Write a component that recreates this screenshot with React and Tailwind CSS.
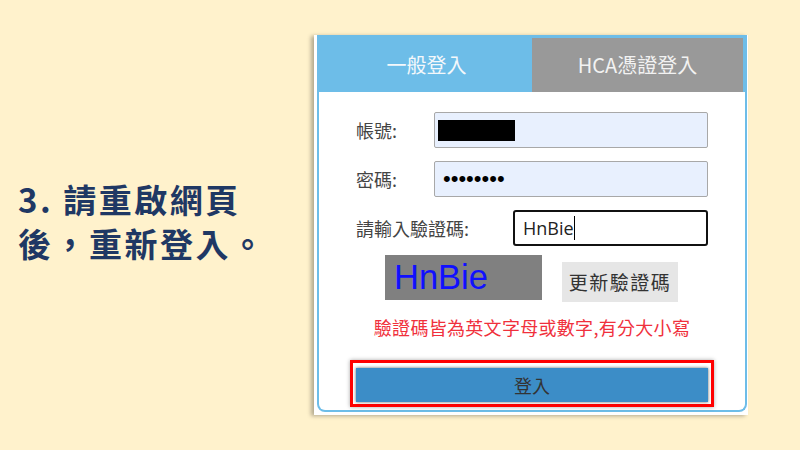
export default function App() {
  const cjk = { fontFamily: '"Noto Sans CJK TC", "Noto Sans", sans-serif' };
  return (
    <div className="w-[800px] h-[450px] bg-[#fff2cc] flex items-start overflow-hidden">
      <div
        className="w-[314px] shrink-0 pt-[177px] pl-[18px] text-[33px] leading-[44px] font-bold text-[#1f3864] tracking-[2.5px]"
        style={cjk}
      >
        <div>3. 請重啟網頁</div>
        <div>後，重新登入。</div>
      </div>
      <div className="mt-[35px] w-[434px] h-[380px] bg-white pl-[3px] pr-[1px] shadow-[-3px_1px_4px_rgba(0,0,0,0.3)]">
        <div className="h-[377px] border-2 border-t-0 border-[#6dbde8] rounded-b-[8px] flex flex-col" style={cjk}>
          <div className="flex h-[57px] bg-[#6dbde8] pt-[3px] pr-[2px] pl-[2px]">
            <div className="flex-1 bg-[#6dbde8] flex items-center justify-center text-[20px] text-[#f4f8fb]">
              一般登入
            </div>
            <div className="flex-1 bg-[#999999] flex items-center justify-center text-[20px] text-[#f2f2f2]">
              HCA憑證登入
            </div>
          </div>
          <div className="flex flex-col px-[37px] pt-[20px] text-[18px] text-[#444]">
            <div className="flex items-center h-[36px]">
              <div className="w-[78px] shrink-0">帳號:</div>
              <div className="flex-1 h-[36px] bg-[#e8f0fe] border border-[#a8a8a8] rounded-[2px] flex items-center pl-[3px]">
                <div className="w-[77px] h-[21px] bg-black" />
              </div>
            </div>
            <div className="flex items-center h-[36px] mt-[13px]">
              <div className="w-[78px] shrink-0">密碼:</div>
              <div className="flex-1 h-[36px] bg-[#e8f0fe] border border-[#a8a8a8] rounded-[2px] flex items-center pl-[8px]">
                <span className="text-[22px] text-black leading-none" style={{ fontFamily: '"Liberation Sans", sans-serif' }}>
                  ••••••••
                </span>
              </div>
            </div>
            <div className="flex items-center h-[36px] mt-[13px]">
              <div className="w-[157px] shrink-0">請輸入驗證碼:</div>
              <div className="flex-1 h-[36px] bg-white border-2 border-[#111] rounded-[3px] flex items-center pl-[8px]">
                <span className="text-[18px] text-[#222]" style={{ fontFamily: '"Open Sans", "Noto Sans", sans-serif' }}>
                  HnBie
                </span>
                <span className="w-[1px] h-[24px] bg-black" />
              </div>
            </div>
            <div className="flex items-start mt-[9px] pl-[29px] gap-[20px]">
              <div className="w-[157px] h-[45px] bg-[#808080] flex items-center pl-[9px]">
                <span className="text-[34.5px] text-[#1010ff] leading-none" style={{ fontFamily: '"Liberation Sans", Arial, sans-serif' }}>
                  HnBie
                </span>
              </div>
              <div className="mt-[7px] w-[116px] h-[40px] bg-[#e6e6e6] flex items-center justify-center text-[19px] text-[#333] tracking-[1.5px]">
                更新驗證碼
              </div>
            </div>
          </div>
          <div className="mt-[15px] text-center text-[18px] leading-[20px] tracking-[0.3px] text-[#f0303c]">
            驗證碼皆為英文字母或數字,有分大小寫
          </div>
          <div className="mt-[23px] mx-auto w-[364px] h-[47px] border-[3px] border-[#ff0000] bg-white pt-[5px] px-[3px] pb-[2px] shadow-[0_0_4px_rgba(0,0,0,0.35)]">
            <div className="h-full bg-[#3c8dc7] shadow-[0_0_3px_rgba(0,0,0,0.6)] flex items-center justify-center text-[18px] text-[#333]">
              登入
            </div>
          </div>
        </div>
      </div>
    </div>
  );
}
